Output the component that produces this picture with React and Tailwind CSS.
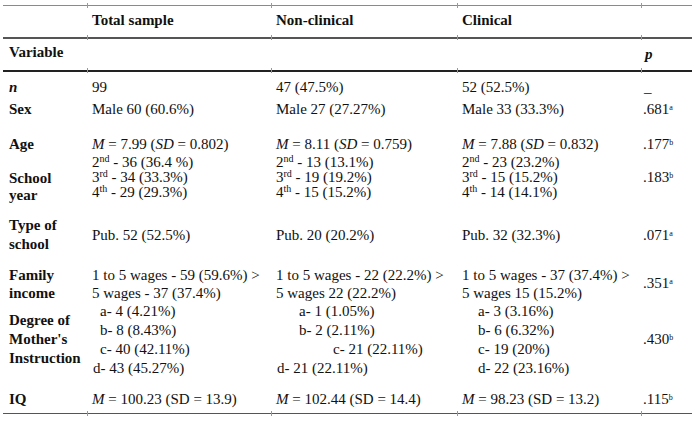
import React from 'react';

const cols = 'grid grid-cols-[84px_184px_186px_184px_51px]';

function Sup({ children }) {
  return <sup className="text-[10px]">{children}</sup>;
}

function Mark({ children }) {
  return <sup className="text-[8px]">{children}</sup>;
}

// horizontal rule with the small cell-border ticks seen at column edges
function Rule({ className }) {
  return (
    <div className={'relative w-[689px] ' + className}>
      <span className="absolute left-[84px] -top-[2px] w-px h-[5px] bg-[#999]" />
      <span className="absolute left-[268px] -top-[2px] w-px h-[5px] bg-[#999]" />
      <span className="absolute left-[454px] -top-[2px] w-px h-[5px] bg-[#999]" />
      <span className="absolute left-[638px] -top-[2px] w-px h-[5px] bg-[#999]" />
    </div>
  );
}

export default function App() {
  return (
    <div className="w-[698px] h-[422px] bg-white text-[#111] font-['Liberation_Serif','Times_New_Roman',serif] text-[15px] leading-[15px] pt-[5px] pl-[3px]">
      <Rule className="h-px bg-[#8a8a8a]" />

      {/* header row 1 */}
      <div className={cols + ' h-[31px] font-bold'}>
        <div />
        <div className="pl-[5px] pt-[7px]">Total sample</div>
        <div className="pl-[5px] pt-[7px]">Non-clinical</div>
        <div className="pl-[5px] pt-[7px]">Clinical</div>
        <div />
      </div>
      <Rule className="h-[2px] bg-[#555]" />

      {/* header row 2 */}
      <div className={cols + ' h-[31px] font-bold'}>
        <div className="pl-[6px] pt-[6px]">Variable</div>
        <div />
        <div />
        <div />
        <div className="pl-[4px] pt-[8px] italic">p</div>
      </div>
      <Rule className="h-[2px] bg-[#222]" />

      {/* n */}
      <div className={cols + ' h-[27px]'}>
        <div className="pl-[6px] pt-[8px] font-bold italic">n</div>
        <div className="pl-[5px] pt-[8px]">99</div>
        <div className="pl-[5px] pt-[8px]">47 (47.5%)</div>
        <div className="pl-[5px] pt-[8px]">52 (52.5%)</div>
        <div className="pl-[3px] pt-[8px]">_</div>
      </div>

      {/* Sex */}
      <div className={cols + ' h-[25px]'}>
        <div className="pl-[6px] pt-[3px] font-bold">Sex</div>
        <div className="pl-[5px] pt-[3px]">Male 60 (60.6%)</div>
        <div className="pl-[5px] pt-[3px]">Male 27 (27.27%)</div>
        <div className="pl-[5px] pt-[3px]">Male 33 (33.3%)</div>
        <div className="pl-[2px] pt-[3px]">.681<Mark>a</Mark></div>
      </div>

      {/* Age */}
      <div className={cols + ' h-[31px]'}>
        <div className="pl-[6px] pt-[13px] font-bold">Age</div>
        <div className="pl-[5px] pt-[13px]"><i>M</i> = 7.99 (<i>SD</i> = 0.802)</div>
        <div className="pl-[5px] pt-[13px]"><i>M</i> = 8.11 (<i>SD</i> = 0.759)</div>
        <div className="pl-[5px] pt-[13px]"><i>M</i> = 7.88 (<i>SD</i> = 0.832)</div>
        <div className="pl-[2px] pt-[13px]">.177<Mark>b</Mark></div>
      </div>

      {/* School year */}
      <div className={cols + ' h-[50px]'}>
        <div className="pl-[6px] pt-[15px] font-bold leading-[17px]">School<br />year</div>
        <div className="pl-[5px] leading-[15px]">
          <div>2<Sup>nd</Sup> - 36 (36.4 %)</div>
          <div>3<Sup>rd</Sup> - 34 (33.3%)</div>
          <div>4<Sup>th</Sup> - 29 (29.3%)</div>
        </div>
        <div className="pl-[5px] leading-[15px]">
          <div>2<Sup>nd</Sup> - 13 (13.1%)</div>
          <div>3<Sup>rd</Sup> - 19 (19.2%)</div>
          <div>4<Sup>th</Sup> - 15 (15.2%)</div>
        </div>
        <div className="pl-[5px] leading-[15px]">
          <div>2<Sup>nd</Sup> - 23 (23.2%)</div>
          <div>3<Sup>rd</Sup> - 15 (15.2%)</div>
          <div>4<Sup>th</Sup> - 14 (14.1%)</div>
        </div>
        <div className="pl-[2px] pt-[15px]">.183<Mark>b</Mark></div>
      </div>

      {/* Type of school */}
      <div className={cols + ' h-[51px]'}>
        <div className="pl-[6px] pt-[11px] font-bold leading-[19px]">Type of<br />school</div>
        <div className="pl-[5px] pt-[23px]">Pub. 52 (52.5%)</div>
        <div className="pl-[5px] pt-[23px]">Pub. 20 (20.2%)</div>
        <div className="pl-[5px] pt-[23px]">Pub. 32 (32.3%)</div>
        <div className="pl-[2px] pt-[23px]">.071<Mark>a</Mark></div>
      </div>

      {/* Family income */}
      <div className={cols + ' h-[46px]'}>
        <div className="pl-[6px] pt-[10px] font-bold leading-[18px]">Family<br />income</div>
        <div className="pl-[5px] pt-[10px] leading-[18px]">
          <div>1 to 5 wages - 59 (59.6%) &gt;</div>
          <div>5 wages - 37 (37.4%)</div>
        </div>
        <div className="pl-[5px] pt-[10px] leading-[18px]">
          <div>1 to 5 wages - 22 (22.2%) &gt;</div>
          <div>5 wages 22 (22.2%)</div>
        </div>
        <div className="pl-[5px] pt-[10px] leading-[18px]">
          <div>1 to 5 wages - 37 (37.4%) &gt;</div>
          <div>5 wages 15 (15.2%)</div>
        </div>
        <div className="pl-[2px] pt-[20px]">.351<Mark>a</Mark></div>
      </div>

      {/* Degree of Mother's Instruction */}
      <div className={cols + ' h-[82px]'}>
        <div className="pl-[6px] pt-[9px] font-bold leading-[19px]">Degree of<br />Mother's<br />Instruction</div>
        <div className="leading-[19px]">
          <div className="pl-[13px]">a- 4 (4.21%)</div>
          <div className="pl-[13px]">b- 8 (8.43%)</div>
          <div className="pl-[13px]">c- 40 (42.11%)</div>
          <div className="pl-[6px]">d- 43 (45.27%)</div>
        </div>
        <div className="leading-[19px]">
          <div className="pl-[28px]">a- 1 (1.05%)</div>
          <div className="pl-[28px]">b- 2 (2.11%)</div>
          <div className="pl-[62px]">c- 21 (22.11%)</div>
          <div className="pl-[6px]">d- 21 (22.11%)</div>
        </div>
        <div className="leading-[19px] pl-[21px]">
          <div>a- 3 (3.16%)</div>
          <div>b- 6 (6.32%)</div>
          <div>c- 19 (20%)</div>
          <div>d- 22 (23.16%)</div>
        </div>
        <div className="pl-[2px] pt-[30px]">.430<Mark>b</Mark></div>
      </div>

      {/* IQ */}
      <div className={cols + ' h-[29px]'}>
        <div className="pl-[6px] pt-[8px] font-bold">IQ</div>
        <div className="pl-[5px] pt-[8px]"><i>M</i> = 100.23 (SD = 13.9)</div>
        <div className="pl-[5px] pt-[8px]"><i>M</i> = 102.44 (SD = 14.4)</div>
        <div className="pl-[5px] pt-[8px]"><i>M</i> = 98.23 (SD = 13.2)</div>
        <div className="pl-[2px] pt-[8px]">.115<Mark>b</Mark></div>
      </div>
      <Rule className="h-px bg-[#555]" />
    </div>
  );
}
